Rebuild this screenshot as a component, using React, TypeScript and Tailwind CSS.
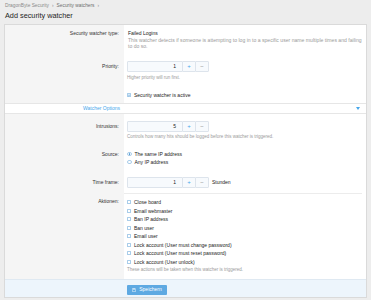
import React from 'react';

const ACTIONS: { label: string }[] = [
  { label: 'Close board' },
  { label: 'Email webmaster' },
  { label: 'Ban IP address' },
  { label: 'Ban user' },
  { label: 'Email user' },
  { label: 'Lock account (User must change password)' },
  { label: 'Lock account (User must reset password)' },
  { label: 'Lock account (User unlock)' },
];

function Spinner({ value }: { value: string }) {
  return (
    <div className="flex h-[11px] w-[82px]">
      <div className="flex-1 border border-[#dde4ec] bg-[#f7fafd] rounded-l-[1px] text-right pr-[6px] text-[5px] leading-[9px] text-[#222]">
        {value}
      </div>
      <div className="w-[12px] border-y border-[#dde4ec] bg-[#f7fafd] text-center text-[6px] leading-[9px] text-[#47a7eb]">+</div>
      <div className="w-[14px] border border-[#dde4ec] bg-[#f7fafd] rounded-r-[1px] text-center text-[6px] leading-[9px] text-[#8a8a8a]">−</div>
    </div>
  );
}

function CheckBox({ checked = false }: { checked?: boolean }) {
  return (
    <span
      className={`inline-flex items-center justify-center w-[4px] h-[4px] mr-[3px] border border-[#a9cdea] rounded-[0.5px] ${
        checked ? 'bg-[#d6e9f8]' : 'bg-white'
      }`}
    >
      {checked && (
        <svg width="3" height="3" viewBox="0 0 10 10">
          <path d="M1 5 L4 8 L9 2" stroke="#4b95d1" strokeWidth="2" fill="none" />
        </svg>
      )}
    </span>
  );
}

function Radio({ checked = false }: { checked?: boolean }) {
  return (
    <span className="inline-flex items-center justify-center w-[4.5px] h-[4.5px] mr-[3px] border border-[#a9cdea] rounded-full bg-white">
      {checked && <span className="w-[1.5px] h-[1.5px] rounded-full bg-[#4b95d1]" />}
    </span>
  );
}

export default function App() {
  return (
    <div className="w-[371px] h-[300px] overflow-hidden bg-[#ededed] font-['Liberation_Sans',Arial,sans-serif]">
      {/* breadcrumb + title */}
      <div className="h-[24px] px-[5px] pt-[3px]">
        <div className="flex items-center gap-[3px] text-[4.8px] leading-[6px] text-[#8b8b8b]">
          <span>DragonByte Security</span>
          <span>›</span>
          <span className="text-[#6d6d6d]">Security watchers</span>
          <span>›</span>
        </div>
        <h1 className="mt-[2px] text-[7.3px] leading-[9px] text-[#1e1e1e]">Add security watcher</h1>
      </div>

      <div className="ml-[4px] w-[363px] border border-[#dadada] bg-white">
        {/* type */}
        <div className="flex">
          <div className="w-[119px] shrink-0 bg-[#f5f5f5] text-right pr-[5px] pt-[5px] text-[5px] leading-[6.5px] text-[#333]">
            Security watcher type:
          </div>
          <div className="flex-1 pl-[4px] pr-[4px] pt-[5px] pb-[6px]">
            <div className="text-[5px] leading-[6.5px] text-[#222]">Failed Logins</div>
            <div className="text-[5.1px] leading-[6.5px] text-[#9a9a9a]">
              This watcher detects if someone is attempting to log in to a specific user name multiple times and failing to do so.
            </div>
          </div>
        </div>

        {/* priority */}
        <div className="flex">
          <div className="w-[119px] shrink-0 bg-[#f5f5f5] text-right pr-[5px] pt-[5.5px] text-[5px] leading-[11px] text-[#333]">
            Priority:
          </div>
          <div className="flex-1 pl-[3px] pt-[5.5px] pb-[4.5px]">
            <Spinner value="1" />
            <div className="mt-[3px] text-[4.5px] leading-[6.5px] text-[#9a9a9a]">Higher priority will run first.</div>
            <div className="mt-[10.5px] flex items-center text-[5px] leading-[6.5px] text-[#222]">
              <CheckBox checked />
              Security watcher is active
            </div>
          </div>
        </div>

        {/* section header */}
        <div className="flex h-[11px] items-center border-y border-[#e6e6e6]">
          <div className="w-[119px] shrink-0 text-right pr-[4px] text-[5px] text-[#47a7eb]">Watcher Options</div>
          <div className="flex-1 flex justify-end pr-[6px]">
            <svg width="4" height="3" viewBox="0 0 4 3">
              <path d="M0 0 L4 0 L2 3 Z" fill="#47a7eb" />
            </svg>
          </div>
        </div>

        {/* intrusions */}
        <div className="flex">
          <div className="w-[119px] shrink-0 bg-[#f5f5f5] text-right pr-[5px] pt-[7px] text-[5px] leading-[11px] text-[#333]">
            Intrusions:
          </div>
          <div className="flex-1 pl-[3px] pt-[7px] pb-[5px]">
            <Spinner value="5" />
            <div className="mt-[2px] text-[4.5px] leading-[6.5px] text-[#9a9a9a]">
              Controls how many hits should be logged before this watcher is triggered.
            </div>
          </div>
        </div>

        {/* source */}
        <div className="flex">
          <div className="w-[119px] shrink-0 bg-[#f5f5f5] text-right pr-[5px] pt-[4.5px] text-[5px] leading-[8px] text-[#333]">
            Source:
          </div>
          <div className="flex-1 pl-[3px] pt-[4.5px] text-[5px] leading-[8px] text-[#222]">
            <div className="flex items-center">
              <Radio checked />
              The same IP address
            </div>
            <div className="flex items-center">
              <Radio />
              Any IP address
            </div>
          </div>
        </div>

        {/* time frame */}
        <div className="flex">
          <div className="w-[119px] shrink-0 bg-[#f5f5f5] text-right pr-[5px] pt-[10.5px] text-[5px] leading-[11px] text-[#333]">
            Time frame:
          </div>
          <div className="flex-1 pl-[3px] pt-[10.5px] pb-[5px] flex items-center gap-[3px]">
            <Spinner value="1" />
            <span className="text-[5px] leading-[11px] text-[#222]">Stunden</span>
          </div>
        </div>

        {/* actions */}
        <div className="flex">
          <div className="w-[119px] shrink-0 bg-[#f5f5f5] text-right pr-[5px] pt-[4.5px] text-[5px] leading-[8.5px] text-[#333]">
            Aktionen:
          </div>
          <div className="flex-1 pl-[3px] mr-[4px] border-t border-[#ececec] pt-[4.5px] pb-[6px]">
            {ACTIONS.map((a) => (
              <div key={a.label} className="flex items-center text-[5px] leading-[8.5px] text-[#222]">
                <CheckBox />
                {a.label}
              </div>
            ))}
            <div className="mt-[0.5px] text-[4.5px] leading-[6.5px] text-[#9a9a9a]">
              These actions will be taken when this watcher is triggered.
            </div>
          </div>
        </div>

        {/* footer */}
        <div className="border-t border-[#dfe9f2] bg-[#edf5fc] pl-[122px] pt-[5px] pb-[2px]">
          <button
            type="button"
            className="flex h-[10px] w-[40px] items-center justify-center gap-[3px] rounded-[1px] bg-[#5ea9e2] text-[5px] text-white"
          >
            <svg width="4" height="4" viewBox="0 0 10 10">
              <path d="M1 1 H8 L9 2 V9 H1 Z" fill="none" stroke="#fff" strokeWidth="1.2" />
              <rect x="3" y="1.5" width="4" height="2.5" fill="#fff" />
            </svg>
            Speichern
          </button>
        </div>
      </div>
    </div>
  );
}
